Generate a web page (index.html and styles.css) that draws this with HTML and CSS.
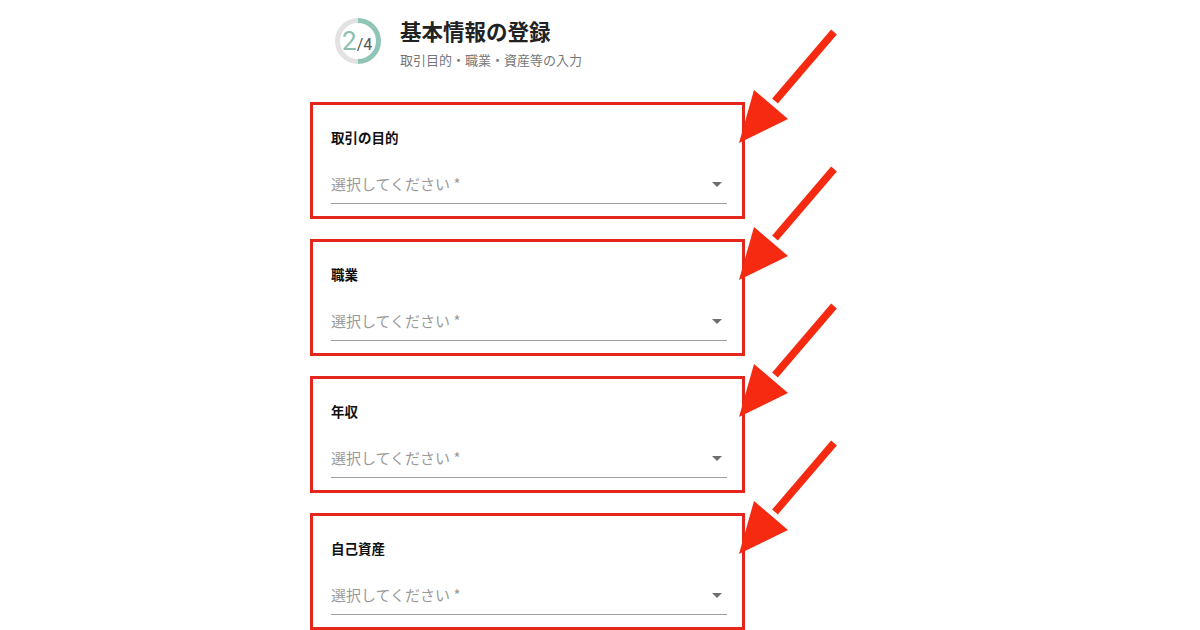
FILE: index.html
```html
<!DOCTYPE html>
<html lang="ja">
<head>
  <meta charset="UTF-8">
  <meta name="viewport" content="width=device-width, initial-scale=1.0">
  <title>基本情報の登録</title>
  <link rel="stylesheet" href="styles.css">
</head>
<body>
  <div class="page">
    <div class="header">
      <div class="step">
        <svg class="ring" width="46" height="46" viewBox="0 0 46 46">
          <path d="M23 2.5 A20.5 20.5 0 0 0 23 43.5" fill="none" stroke="#e2e2e2" stroke-width="5"/>
          <path d="M23 2.5 A20.5 20.5 0 0 1 23 43.5" fill="none" stroke="#8fc5b6" stroke-width="5"/>
        </svg>
        <span class="step-num">2<small>/4</small></span>
      </div>
      <div class="titles">
        <h1>基本情報の登録</h1>
        <p>取引目的・職業・資産等の入力</p>
      </div>
    </div>

    <div class="field">
      <div class="label">取引の目的</div>
      <div class="select"><span>選択してください *</span><i class="caret"></i></div>
      <svg class="arrow" width="110" height="120" viewBox="0 0 110 120"><line x1="97" y1="3" x2="38" y2="72"/><polygon points="17,61 51,90 2,114"/></svg>
    </div>

    <div class="field">
      <div class="label">職業</div>
      <div class="select"><span>選択してください *</span><i class="caret"></i></div>
      <svg class="arrow" width="110" height="120" viewBox="0 0 110 120"><line x1="97" y1="3" x2="38" y2="72"/><polygon points="17,61 51,90 2,114"/></svg>
    </div>

    <div class="field">
      <div class="label">年収</div>
      <div class="select"><span>選択してください *</span><i class="caret"></i></div>
      <svg class="arrow" width="110" height="120" viewBox="0 0 110 120"><line x1="97" y1="3" x2="38" y2="72"/><polygon points="17,61 51,90 2,114"/></svg>
    </div>

    <div class="field">
      <div class="label">自己資産</div>
      <div class="select"><span>選択してください *</span><i class="caret"></i></div>
      <svg class="arrow" width="110" height="120" viewBox="0 0 110 120"><line x1="97" y1="3" x2="38" y2="72"/><polygon points="17,61 51,90 2,114"/></svg>
    </div>
  </div>
</body>
</html>
```

FILE: styles.css
```css
body { margin: 0; background: #fff; font-family: "Noto Sans CJK JP", "Noto Sans", sans-serif; color: #222; }
.page { width: 435px; margin-left: 310px; padding-top: 18px; }

.header { display: flex; align-items: flex-start; padding-left: 25px; gap: 19px; margin-bottom: 33px; }
.step { position: relative; width: 46px; height: 46px; }
.ring { display: block; }
.step-num { position: absolute; left: 7px; top: 10px; font-family: Roboto, "Liberation Sans", sans-serif; font-size: 26px; line-height: 26px; color: #8bbfb1; }
.step-num small { font-size: 16px; color: #555; }
.titles h1 { margin: 0; font-size: 21.5px; line-height: 26px; font-weight: 700; color: #222; }
.titles p { margin: 7px 0 0; font-size: 13px; line-height: 18px; color: #777; }

.field { position: relative; border: 3px solid #e4261c; padding: 22px 15px 12px 18px; margin-bottom: 20px; }
.label { font-size: 13.5px; line-height: 20px; font-weight: 700; color: #111; }
.select { display: flex; align-items: center; justify-content: space-between; height: 33px; margin-top: 23px; border-bottom: 1px solid #9e9e9e; }
.select span { font-size: 15px; color: #9a9a9a; padding-bottom: 6px; }
.caret { width: 0; height: 0; border-left: 5px solid transparent; border-right: 5px solid transparent; border-top: 5px solid #6f6f6f; margin: 0 5px 4px 0; }

.arrow { position: absolute; left: calc(100% - 5px); top: -76px; }
.arrow line { stroke: #f52a10; stroke-width: 7.5; }
.arrow polygon { fill: #f52a10; }
```
